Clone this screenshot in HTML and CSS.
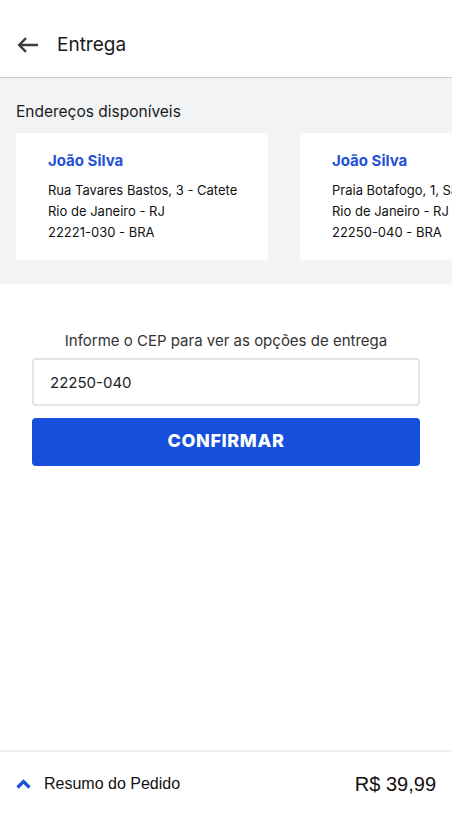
FILE: index.html
```html
<!DOCTYPE html>
<html lang="pt-BR">
<head>
<meta charset="utf-8">
<link rel="stylesheet" href="styles.css">
</head>
<body>
<div class="page">
  <header class="topbar">
    <svg class="back" width="22" height="16" viewBox="0 0 22 16"><path d="M21 8H2.5M9 1.2L2.2 8l6.8 6.8" fill="none" stroke="#3d3d3d" stroke-width="2.4"/></svg>
    <h1 class="title">Entrega</h1>
  </header>
  <section class="addresses">
    <h2 class="section-title">Endereços disponíveis</h2>
    <div class="cards">
      <div class="card">
        <div class="name">João Silva</div>
        <div class="line">Rua Tavares Bastos, 3 - Catete</div>
        <div class="line">Rio de Janeiro - RJ</div>
        <div class="line">22221-030 - BRA</div>
      </div>
      <div class="card">
        <div class="name">João Silva</div>
        <div class="line">Praia Botafogo, 1, Sala 101</div>
        <div class="line">Rio de Janeiro - RJ</div>
        <div class="line">22250-040 - BRA</div>
      </div>
    </div>
  </section>
  <section class="cep">
    <p class="cep-label">Informe o CEP para ver as opções de entrega</p>
    <div class="input">22250-040</div>
    <button class="confirm">CONFIRMAR</button>
  </section>
  <div class="spacer"></div>
  <footer class="summary">
    <div class="summary-left">
      <svg class="chev" width="15" height="10" viewBox="0 0 15 10"><path d="M1.5 8.5L7.5 2.5l6 6" fill="none" stroke="#1a4fd6" stroke-width="3.2"/></svg>
      <span class="summary-text">Resumo do Pedido</span>
    </div>
    <span class="price">R$ 39,99</span>
  </footer>
</div>
</body>
</html>
```
FILE: styles.css
```css
* { box-sizing: border-box; margin: 0; padding: 0; }
html, body { width: 452px; height: 814px; overflow: hidden; background: #fff; }
body { font-family: Inter, "Noto Sans", sans-serif; color: #1a1a1a; }
.page { display: flex; flex-direction: column; height: 814px; }
.topbar { height: 78px; display: flex; align-items: center; padding-left: 17px; border-bottom: 1px solid #c9c9c9; padding-top: 12px; }
.back { display: block; margin-right: 18px; }
.title { font-size: 19px; font-weight: 400; color: #1a1a1a; }
.addresses { background: #f2f3f5; height: 206px; padding: 23px 0 0 16px; overflow: hidden; }
.section-title { font-size: 15.5px; font-weight: 400; color: #1a1a1a; line-height: 22px; }
.cards { display: flex; gap: 32px; margin-top: 10px; }
.card { flex: 0 0 252px; height: 127px; background: #fff; padding: 18px 0 0 32px; white-space: nowrap; overflow: hidden; }
.name { color: #2451d6; font-weight: 700; font-size: 15px; line-height: 20px; margin-bottom: 9px; }
.line { font-size: 13px; line-height: 21px; color: #111; }
.cep { padding: 46px 32px 0; display: flex; flex-direction: column; }
.cep-label { text-align: center; font-size: 15px; color: #333; line-height: 22px; }
.input { margin-top: 6px; height: 48px; border: 2px solid #e4e4e4; border-radius: 4px; padding-left: 16px; display: flex; align-items: center; font-size: 15px; color: #222; }
.confirm { margin-top: 12px; height: 48px; padding-bottom: 4px; border: 0; border-radius: 4px; background: #154fdb; color: #fff; font-family: Inter, sans-serif; font-weight: 800; font-size: 18px; letter-spacing: 0.6px; }
.spacer { flex: 1; }
.summary { height: 64px; border-top: 2px solid #f0f0f0; display: flex; align-items: center; justify-content: space-between; padding: 2px 16px 0 16px; font-family: "Liberation Sans", Arial, sans-serif; }
.summary-left { display: flex; align-items: center; }
.chev { display: block; margin-right: 13px; }
.summary-text { font-size: 16px; color: #111; }
.price { font-size: 20px; color: #111; }
```
